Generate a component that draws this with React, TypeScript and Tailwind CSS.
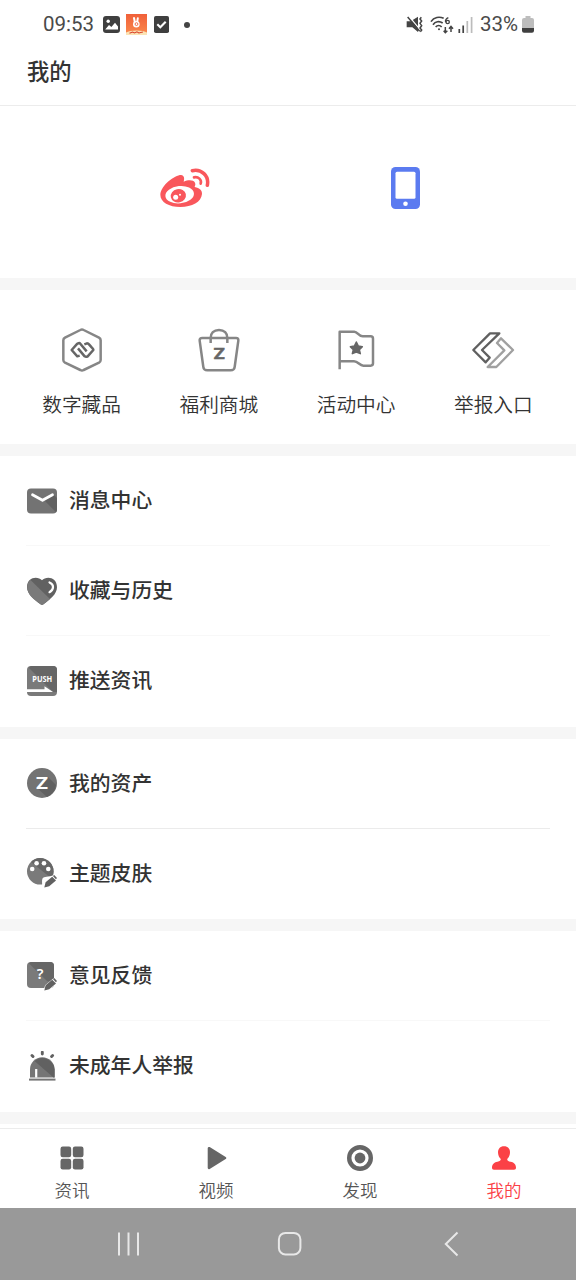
import React from 'react';

interface Item {
  label: string;
  icon: React.ReactNode;
}

const GRAY = '#737373';
const DARK = '#616161';

/* status bar icons */

const PictureIcon = () => (
  <svg width="17" height="17" viewBox="0 0 17 17">
    <rect width="17" height="17" rx="3" fill="#3f3f3f" />
    <path d="M2.2 13.4 6 9l2.4 2 3.6-4.2 3 3.8v2.8z" fill="#fff" />
    <circle cx="5.2" cy="5.2" r="1.7" fill="#fff" />
  </svg>
);

const BunnyIcon = () => (
  <svg width="21" height="21" viewBox="0 0 21 21">
    <defs>
      <linearGradient id="bunny" x1="0" y1="0" x2="0" y2="1">
        <stop offset="0" stopColor="#f0603a" />
        <stop offset="1" stopColor="#fb8a4c" />
      </linearGradient>
    </defs>
    <rect width="21" height="21" fill="url(#bunny)" />
    <path d="M8 4 9 9M11.8 4.3 11 9" stroke="#fff" strokeWidth="2" strokeLinecap="round" />
    <circle cx="10.3" cy="10.3" r="3.3" fill="#fff" />
    <circle cx="10.5" cy="10.1" r="1.4" fill="none" stroke="#f0603a" strokeWidth="0.9" />
    <path d="M0 18.5C4 15.7 17 15.7 21 18.5V21H0z" fill="#fbe3b4" />
    <path d="M3.5 19.2l3-1.2 2 1 2.4-1.2 2 1.2 4-1" fill="none" stroke="#d9422b" strokeWidth="1.1" />
  </svg>
);

const CheckBoxIcon = () => (
  <svg width="15" height="17" viewBox="0 0 15 17">
    <rect width="15" height="17" rx="1.8" fill="#3f3f3f" />
    <path d="m3.3 8.3 3 3 5.4-5.6" fill="none" stroke="#fff" strokeWidth="2.1" />
  </svg>
);

const MuteIcon = () => (
  <svg width="17" height="17" viewBox="352 48 51 51" fill="none" stroke="#444">
    <path d="M354 64h12l22-14v46l-17-14h-17z" fill="#444" stroke="none" />
    <path d="m360 48 34 41" stroke="#fff" strokeWidth="4" />
    <path d="m357 51 36 43" strokeWidth="4.5" />
    <path d="m398 52-4 5 5 6-5 7 5 7-5 7 5 6-4 5" strokeWidth="4.5" />
  </svg>
);

const WifiIcon = () => (
  <svg width="24" height="18" viewBox="424 46 72 54" fill="none" stroke="#444">
    <path d="M427 63c9-14 25-16 38-10M433 72c7-10 19-12 29-5M441 79c5-6 13-6 18 0" strokeWidth="5" />
    <circle cx="451" cy="86" r="3" fill="#444" stroke="none" />
    <path d="M479 51c-8 4-9 11-8 14" strokeWidth="4" />
    <circle cx="477" cy="64" r="5" strokeWidth="4" />
    <path d="M470 79v16M465 90l5 6 6-6M487 94V78M481 84l6-7 6 7" strokeWidth="4.5" />
  </svg>
);

const SignalIcon = () => (
  <svg width="15" height="16" viewBox="0 0 15 16">
    <path d="M1.3 12v4M5.2 8.5V16" stroke="#444" strokeWidth="1.7" />
    <path d="M9.3 4v12M13.6 0v16" stroke="#bcbcbc" strokeWidth="1.7" />
  </svg>
);

const BatteryIcon = () => (
  <svg width="12" height="17" viewBox="0 0 12 17">
    <path d="M3.5 0h5v2H10a2 2 0 0 1 2 2v8H0V4a2 2 0 0 1 2-2h1.5z" fill="#bdbdbd" />
    <path d="M0 12h12v2.7a2 2 0 0 1-2 2H2a2 2 0 0 1-2-2z" fill="#3f3f3f" />
  </svg>
);

/* login icons */

const WeiboIcon = () => (
  <svg width="50" height="40" viewBox="60 54 150 120" fill="#f9575c">
    <path d="M61 134C62 106 105 75 123 75c10 1 11 11 8 20 14-6 29-6 34 3 3 6-1 10-1 13 15 3 23 10 22 21-2 24-30 39-65 39-34 0-60-15-60-37z" />
    <ellipse cx="119" cy="134" rx="43" ry="26" fill="#fff" transform="rotate(-6 119 134)" />
    <ellipse cx="115" cy="137" rx="23" ry="20" transform="rotate(-12 115 137)" />
    <circle cx="107" cy="142" r="7.5" fill="#fff" />
    <circle cx="120" cy="134" r="3" fill="#fff" />
    <path d="M157 62c27-6 51 15 45 44" fill="none" stroke="#f9575c" strokeWidth="10.5" strokeLinecap="round" />
    <path d="M162 82c13-3 24 7 20 19" fill="none" stroke="#f9575c" strokeWidth="8" strokeLinecap="round" />
  </svg>
);

const PhoneIcon = () => (
  <svg width="29" height="42" viewBox="0 0 29 42">
    <rect width="29" height="42" rx="4.5" fill="#5b7bf0" />
    <rect x="4.5" y="4.7" width="20" height="27" rx="1.5" fill="#fff" />
    <circle cx="14.5" cy="36.8" r="2.3" fill="#fff" />
  </svg>
);

/* shortcut icons */

const HexIcon = () => (
  <svg width="42" height="44" viewBox="95 53 126 132" fill="none" strokeLinejoin="round">
    <path d="M153 59q5-3 10 0l46 23q5 3 5 8v59q0 5-5 8l-46 22q-5 3-10 0l-46-22q-5-3-5-8V90q0-5 5-8z" stroke="#868686" strokeWidth="7.5" />
    <path d="m151 136-7 2-17-19 17-19q3-2 7-2l21 25M165 102l8-3q4 0 6 3l8 9q6 6 5 8l-17 19q-5 3-9 0l-20-24" stroke="#666" strokeWidth="7.5" />
  </svg>
);

const BagIcon = () => (
  <svg width="42" height="44" viewBox="505 53 126 132">
    <g fill="none" stroke="#868686" strokeWidth="7.5" strokeLinejoin="round">
      <path d="M518 83h101q8 0 7 8l-11 79q-1 10-12 10h-70q-11 0-12-10l-11-79q-1-8 8-8z" />
      <path d="M543 98V83c0-14 9-24 25-24s25 10 25 24v15" />
    </g>
    <text x="551" y="147" fontSize="44" fontWeight="700" textLength="36" lengthAdjust="spacingAndGlyphs" fontFamily="Inter, sans-serif" fill="#666" stroke="#666" strokeWidth="1.5">Z</text>
  </svg>
);

const FlagIcon = () => (
  <svg width="42" height="44" viewBox="105 53 126 132">
    <path d="M119 177V64h44c10 0 13 14 25 14h24q7 0 7 7v74q0 7-7 7h-22c-12 0-15-13-28-13h-42" fill="none" stroke="#868686" strokeWidth="7.5" strokeLinejoin="round" />
    <path d="m169 95 6 12 12 2-9 9 3 12-12-5-12 5 3-12-9-9 12-2z" fill="#666" stroke="#666" strokeWidth="4.5" strokeLinejoin="round" />
  </svg>
);

const ReportIcon = () => (
  <svg width="44" height="44" viewBox="514 53 132 132" fill="none" strokeWidth="7" strokeLinejoin="round">
    <path d="m571 69-50 50 37 37 12-14-23-23 52-50z" stroke="#606060" />
    <path d="m604 84-12 14 22 22-50 50h26l50-51z" stroke="#a0a0a0" />
  </svg>
);

/* list icons */

const MailIcon = () => (
  <svg width="30" height="30" viewBox="0 0 30 30">
    <rect y="2.5" width="30" height="25" rx="4" fill={GRAY} />
    <path d="M17 14 25.5 7.5 30 12v11.5a4 4 0 0 1-1 2.7z" fill={DARK} />
    <path d="m5.5 8.8 10 5.5 10-5.5" fill="none" stroke="#fff" strokeWidth="2.8" strokeLinecap="round" strokeLinejoin="round" />
  </svg>
);

const HeartIcon = () => (
  <svg width="30" height="30" viewBox="0 0 30 30">
    <path d="M15 4.2C19-.2 30 .5 30 11.2 30 18 23 23.5 16.5 28.2q-1.5 1.1-3 0C7 23.5 0 18 0 11.2 0 .5 11-.2 15 4.2z" fill={DARK} />
    <path d="M1.8 17C-.5 12.5-.5 7.5 3.5 4L23 23l-6.5 5.2q-1.5 1.1-3 0C8.5 24.5 4 21.5 1.8 17z" fill="#7a7a7a" />
    <path d="M22.5 6.5c4.7 1.8 4.7 7.2 0 9.7" fill="none" stroke="#fff" strokeWidth="2.2" strokeLinecap="round" />
  </svg>
);

const PushIcon = () => (
  <svg width="30" height="30" viewBox="0 0 30 30">
    <rect width="30" height="30" rx="4" fill="#7a7a7a" />
    <path d="M2 2 26 26h4V4a4 4 0 0 0-4-4H4a4 4 0 0 0-2 2z" fill="#666" />
    <path d="M0 23.2h17.5v-3L26 26H0z" fill="#fff" />
    <text x="5.3" y="16.2" fontSize="8.8" fontWeight="700" textLength="20" lengthAdjust="spacingAndGlyphs" fontFamily="'Noto Sans', sans-serif" fill="#fff">PUSH</text>
  </svg>
);

const CoinIcon = () => (
  <svg width="30" height="30" viewBox="0 0 30 30">
    <circle cx="15" cy="15" r="15" fill={GRAY} />
    <path d="m10 20 11-11 8 8a15 15 0 0 1-9 12z" fill={DARK} />
    <text x="8.5" y="20.5" fontSize="16" fontWeight="700" textLength="13" lengthAdjust="spacingAndGlyphs" fontFamily="Inter, sans-serif" fill="#fff">Z</text>
  </svg>
);

const Pencil = () => (
  <g>
    <path d="m17.5 29.2 1.3-4.6 8-6.5 3 3-7.5 7z" fill="#fff" stroke="#fff" strokeWidth="1.6" />
    <path d="m17.3 29.5 1.3-5.3 6.6-5.5 3.8 3.8-6.8 5.7zM25.9 18.1l1.3-1 2.9 2.9-1.2 1.3z" fill={DARK} />
  </g>
);

const PaletteIcon = () => (
  <svg width="30" height="30" viewBox="0 0 30 30">
    <circle cx="13.3" cy="13.3" r="13.3" fill="#7a7a7a" />
    <path d="M4 4a13.3 13.3 0 0 1 22.5 10c0 2-1 4-2.5 6z" fill="#666" />
    <g fill="#fff">
      <circle cx="5.2" cy="11" r="2.3" />
      <circle cx="9.6" cy="5.3" r="2.3" />
      <circle cx="17" cy="5.3" r="2.3" />
      <circle cx="21.3" cy="11" r="2.3" />
      <path d="M15 28c.5-2.5-.5-5.5.5-7.5 1.5-2.5 6-1 11.5-3.500v11z" />
    </g>
    <Pencil />
  </svg>
);

const FeedbackIcon = () => (
  <svg width="30" height="30" viewBox="0 0 30 30">
    <rect y="1" width="27" height="26" rx="4" fill="#7a7a7a" />
    <path d="M2 2.5 20 20l7 2V5a4 4 0 0 0-4-4H4q-1 0-2 1.5z" fill="#666" />
    <text x="13.2" y="18" fontSize="14.5" fontWeight="600" textAnchor="middle" fontFamily="'Noto Sans', sans-serif" fill="#fff">?</text>
    <Pencil />
  </svg>
);

const AlarmIcon = () => (
  <svg width="30" height="30" viewBox="0 0 30 30">
    <path d="M3 26.5v-8a12.3 12.3 0 0 1 24.6 0v8z" fill="#757575" />
    <path d="M7.5 10a12.3 12.3 0 0 1 20.1 8.5v8h-1.1z" fill={DARK} />
    <path d="M2 28.6h26.5" stroke="#757575" strokeWidth="2" />
    <path d="M9.2 18v8.5" stroke="#fff" strokeWidth="2.2" />
    <path d="M15.3 1.2v1.8M5 4.5l1 1M25.6 4.5l-1 1" stroke={DARK} strokeWidth="2.9" strokeLinecap="round" />
  </svg>
);

/* bottom tab icons */

const GridIcon = () => (
  <svg width="26" height="26" viewBox="0 0 26 26" fill="#666">
    <rect x="1.5" y="1.5" width="10.7" height="10.7" rx="2.2" />
    <rect x="13.8" y="1.5" width="10.7" height="10.7" rx="2.2" />
    <rect x="1.5" y="13.8" width="10.7" height="10.7" rx="2.2" />
    <rect x="13.8" y="13.8" width="10.7" height="10.7" rx="2.2" />
  </svg>
);

const PlayIcon = () => (
  <svg width="26" height="26" viewBox="0 0 26 26">
    <path d="M6 3.2 22 13 6 22.8z" fill="#666" stroke="#666" strokeWidth="2.6" strokeLinejoin="round" />
  </svg>
);

const DiscoverIcon = () => (
  <svg width="26" height="26" viewBox="0 0 26 26">
    <circle cx="13" cy="13" r="10.8" fill="none" stroke="#666" strokeWidth="4.4" />
    <circle cx="13" cy="13" r="5.4" fill="#666" />
  </svg>
);

const MeIcon = () => (
  <svg width="26" height="26" viewBox="0 0 26 26" fill="#fb4146">
    <path d="M13 1.3c4 0 6 2.7 6 6 0 3-1.2 5.2-2.8 6.7 0 1.8 1 2.3 3.3 2.7 4 .7 5.5 3 5.5 6 0 1.2-.7 2-2 2H3c-1.3 0-2-.8-2-2 0-3 1.5-5.3 5.5-6 2.3-.4 3.3-.9 3.3-2.7C8.2 12.5 7 10.3 7 7.3c0-3.3 2-6 6-6z" />
  </svg>
);

const shortcuts: Item[] = [
  { label: '数字藏品', icon: <HexIcon /> },
  { label: '福利商城', icon: <BagIcon /> },
  { label: '活动中心', icon: <FlagIcon /> },
  { label: '举报入口', icon: <ReportIcon /> },
];

const groups: Item[][] = [
  [
    { label: '消息中心', icon: <MailIcon /> },
    { label: '收藏与历史', icon: <HeartIcon /> },
    { label: '推送资讯', icon: <PushIcon /> },
  ],
  [
    { label: '我的资产', icon: <CoinIcon /> },
    { label: '主题皮肤', icon: <PaletteIcon /> },
  ],
  [
    { label: '意见反馈', icon: <FeedbackIcon /> },
    { label: '未成年人举报', icon: <AlarmIcon /> },
  ],
];

const tabs: Item[] = [
  { label: '资讯', icon: <GridIcon /> },
  { label: '视频', icon: <PlayIcon /> },
  { label: '发现', icon: <DiscoverIcon /> },
  { label: '我的', icon: <MeIcon /> },
];

const StatusBar = () => (
  <div className="flex h-12 shrink-0 items-center justify-between pl-[43px] pr-[42px] pt-[1.5px] font-[Roboto,sans-serif] text-[20.5px] text-[#4a4a4a]">
    <div className="flex items-center">
      <span className="mr-2 w-[52px]">09:53</span>
      <PictureIcon />
      <span className="ml-1.5 mr-[7px]"><BunnyIcon /></span>
      <CheckBoxIcon />
      <span className="ml-[15px] h-1.5 w-1.5 rounded-full bg-[#444]" />
    </div>
    <div className="flex items-center">
      <MuteIcon />
      <span className="ml-[7px] mr-1"><WifiIcon /></span>
      <SignalIcon />
      <span className="ml-[7px] mr-[3px] w-[39px]">33%</span>
      <BatteryIcon />
    </div>
  </div>
);

const MenuGroup = ({ items, line }: { items: Item[]; line: string }) => (
  <section className="bg-white px-[26px] pb-[0.6px]">
    {items.map((item, i) => (
      <div
        key={item.label}
        className={`flex h-[90px] items-center gap-3 pl-px ${i < items.length - 1 ? `border-b ${line}` : 'pb-px'}`}
      >
        {item.icon}
        <span className="pb-0.5 text-[20.8px] font-medium leading-none text-[#333]">{item.label}</span>
      </div>
    ))}
  </section>
);

const App = () => {
  const activeTab = '我的';

  return (
    <div className="flex h-[1280px] w-[576px] flex-col overflow-hidden bg-[#f6f6f6] font-['Noto_Sans_CJK_SC',sans-serif]">
      <header className="h-[106px] shrink-0 border-b border-[#ececec] bg-white">
        <StatusBar />
        <h1 className="pl-[27px] pt-[11px] text-[22.3px] font-medium leading-none text-[#333]">我的</h1>
      </header>

      <section className="flex h-[172px] shrink-0 items-center justify-center gap-[181px] bg-white pb-2 pl-1">
        <WeiboIcon />
        <PhoneIcon />
      </section>

      <section className="mt-3 grid h-[154px] shrink-0 grid-cols-4 bg-white pl-[13px] pr-3.5 pt-[38px]">
        {shortcuts.map((item) => (
          <div key={item.label} className="flex flex-col items-center gap-[22px]">
            {item.icon}
            <span className="text-[19.7px] font-[350] leading-none text-[#333]">{item.label}</span>
          </div>
        ))}
      </section>

      <main className="mt-3 flex flex-col gap-3">
        <MenuGroup items={groups[0]} line="border-[#f8f8f8]" />
        <MenuGroup items={groups[1]} line="border-[#ebebeb]" />
        <MenuGroup items={groups[2]} line="border-[#f8f8f8]" />
      </main>

      <nav className="mt-auto h-[84px] shrink-0 bg-white pt-1">
        <div className="grid h-20 grid-cols-4 border-t border-[#ececec] pt-4">
          {tabs.map((tab) => (
            <div
              key={tab.label}
              className={`flex flex-col items-center gap-2.5 ${tab.label === activeTab ? 'text-[#fb4146]' : 'text-[#555]'}`}
            >
              {tab.icon}
              <span className="text-[17.5px] font-[350] leading-none">{tab.label}</span>
            </div>
          ))}
        </div>
      </nav>

      <footer className="flex h-[72px] shrink-0 items-center bg-[#999] pl-[117px] text-[#e8e8e8]">
        <svg width="24" height="26" viewBox="0 0 24 26" stroke="currentColor" strokeWidth="2">
          <path d="M2 1.5v23M11.5 1.5v23M21 1.5v23" />
        </svg>
        <svg className="ml-[136px]" width="26" height="26" viewBox="0 0 26 26" fill="none" stroke="currentColor" strokeWidth="2">
          <rect x="1.9" y="1.9" width="21.5" height="21.5" rx="6.5" />
        </svg>
        <svg className="ml-[141px]" width="16" height="26" viewBox="0 0 16 26" fill="none" stroke="currentColor" strokeWidth="2">
          <path d="M13.5 1.5 1.8 13l11.7 11.5" />
        </svg>
      </footer>
    </div>
  );
};

export default App;
